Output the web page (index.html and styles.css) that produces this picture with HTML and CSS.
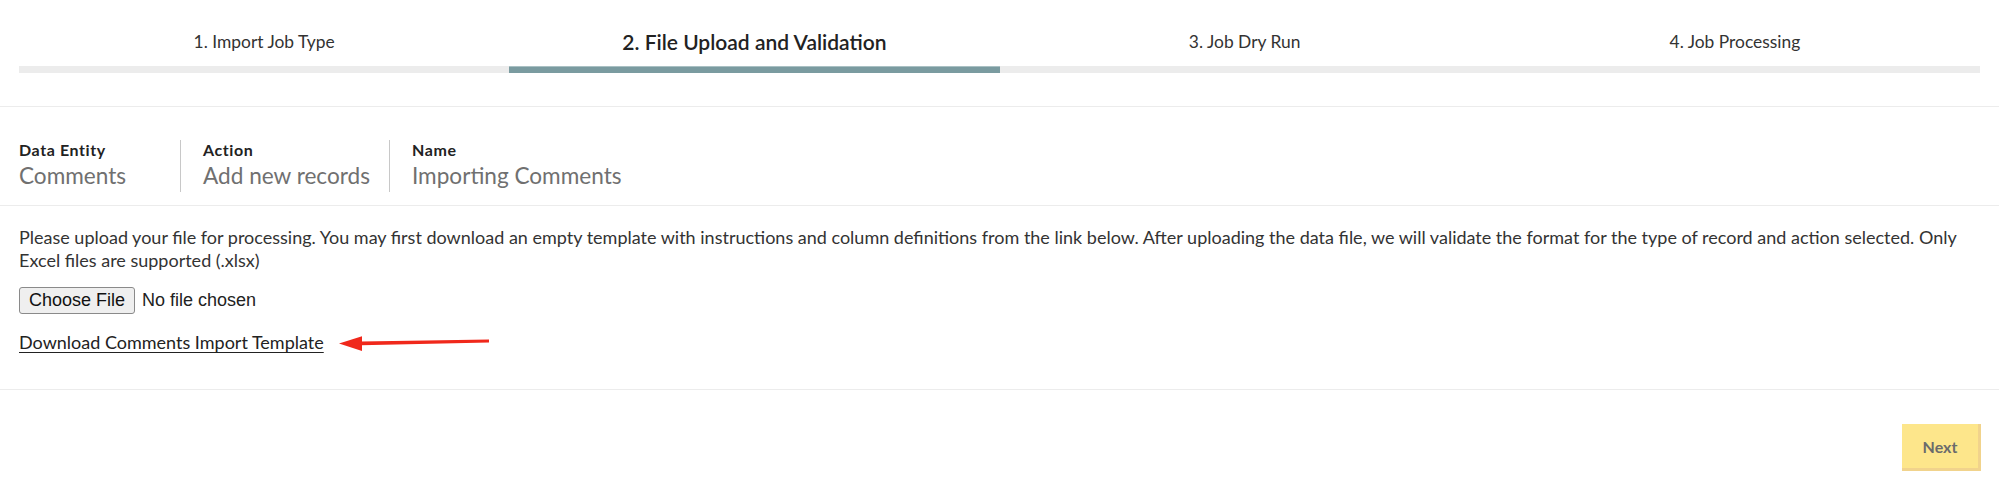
FILE: index.html
```html
<!DOCTYPE html>
<html lang="en">
<head>
<meta charset="utf-8">
<title>Import Job - File Upload and Validation</title>
<link rel="stylesheet" href="styles.css">
</head>
<body>
<div class="page">
  <header class="steps-wrap">
    <ol class="steps">
      <li class="step"><span class="step-label">1. Import Job Type</span><span class="step-bar"></span></li>
      <li class="step active"><span class="step-label">2. File Upload and Validation</span><span class="step-bar"></span></li>
      <li class="step"><span class="step-label">3. Job Dry Run</span><span class="step-bar"></span></li>
      <li class="step"><span class="step-label">4. Job Processing</span><span class="step-bar"></span></li>
    </ol>
  </header>

  <section class="info">
    <div class="info-col first">
      <div class="info-label">Data Entity</div>
      <div class="info-value">Comments</div>
    </div>
    <div class="info-col">
      <div class="info-label">Action</div>
      <div class="info-value">Add new records</div>
    </div>
    <div class="info-col">
      <div class="info-label">Name</div>
      <div class="info-value">Importing Comments</div>
    </div>
  </section>

  <section class="upload">
    <p class="upload-text">Please upload your file for processing. You may first download an empty template with instructions and column definitions from the link below. After uploading the data file, we will validate the format for the type of record and action selected. Only Excel files are supported (.xlsx)</p>
    <div class="file-row">
      <input class="file-input" type="file" accept=".xlsx">
    </div>
    <div class="link-row">
      <a class="template-link" href="#">Download Comments Import Template</a>
      <svg class="arrow" width="152" height="16" viewBox="0 0 152 16" aria-hidden="true">
        <path d="M22 6.6 L150 4.6 L150 7.4 L22 10.2 Z" fill="#f0281b"/>
        <path d="M0 8.6 L23 1.2 L23 16 Z" fill="#f0281b"/>
      </svg>
    </div>
  </section>

  <footer class="actions">
    <button class="next-btn" type="button">Next</button>
  </footer>
</div>
</body>
</html>
```

FILE: styles.css
```css
html, body {
  margin: 0;
  padding: 0;
  background: #ffffff;
}

body {
  font-family: "Lato", "Liberation Sans", sans-serif;
  color: #333333;
}

.page {
  width: 100%;
}

/* ---------- steps ---------- */
.steps-wrap {
  padding: 30px 19px 33px;
  border-bottom: 1px solid #ececec;
}

.steps {
  list-style: none;
  margin: 0;
  padding: 0;
  display: grid;
  grid-template-columns: repeat(4, 1fr);
}

.step {
  display: flex;
  flex-direction: column;
  align-items: center;
}

.step-label {
  display: block;
  height: 24px;
  line-height: 24px;
  font-size: 17.4px;
  color: #333333;
  margin-bottom: 12px;
  white-space: nowrap;
}

.step.active .step-label {
  font-size: 21px;
  font-weight: 600;
  color: #222222;
}

.step-bar {
  display: block;
  width: 100%;
  height: 7px;
  background: #ececec;
}

.step.active .step-bar {
  background: #7a9ba0;
  box-shadow: inset 0 1px 0 #a9c0c3;
}

/* ---------- info ---------- */
.info {
  display: flex;
  padding: 33px 19px 13px;
  border-bottom: 1px solid #ececec;
}

.info-col {
  padding: 0 19px 0 22px;
  border-left: 1px solid #c8c8c8;
}

.info-col.first {
  padding-left: 0;
  border-left: none;
  min-width: 161px;
  box-sizing: border-box;
}

.info-label {
  font-size: 16px;
  font-weight: 700;
  line-height: 20px;
  color: #222222;
  letter-spacing: 0.6px;
}

.info-value {
  font-size: 22.6px;
  line-height: 32px;
  color: #707070;
}

/* ---------- upload ---------- */
.upload {
  padding: 20px 19px 35px;
  border-bottom: 1px solid #ececec;
}

.upload-text {
  margin: 0;
  font-size: 18px;
  line-height: 23px;
  color: #333333;
}

.file-row {
  margin-top: 15px;
  height: 27px;
  display: flex;
  align-items: center;
}

.file-input {
  font-family: "Liberation Sans", "Lato", sans-serif;
  font-size: 18px;
  color: #222222;
}

.file-input::file-selector-button {
  font-family: "Liberation Sans", "Lato", sans-serif;
  font-size: 18px;
  height: 27px;
  padding: 0 9px;
  margin-right: 7px;
  background: #efefef;
  border: 1px solid #8a8a8a;
  border-radius: 3px;
  color: #111111;
}

.link-row {
  margin-top: 17px;
  display: flex;
  align-items: center;
  height: 23px;
}

.template-link {
  font-size: 18px;
  line-height: 23px;
  color: #222222;
  text-decoration: underline;
  text-underline-offset: 3px;
}

.arrow {
  margin-left: 15px;
  display: block;
}

/* ---------- footer ---------- */
.actions {
  display: flex;
  justify-content: flex-end;
  padding: 34px 18px 20px;
}

.next-btn {
  width: 79px;
  height: 47px;
  background: #fde68b;
  border: none;
  border-right: 3px solid #f1d38c;
  border-bottom: 3px solid #f1d38c;
  font-family: "Lato", "Liberation Sans", sans-serif;
  font-size: 16px;
  font-weight: 700;
  color: #6b6b6b;
  padding: 0;
}
```
